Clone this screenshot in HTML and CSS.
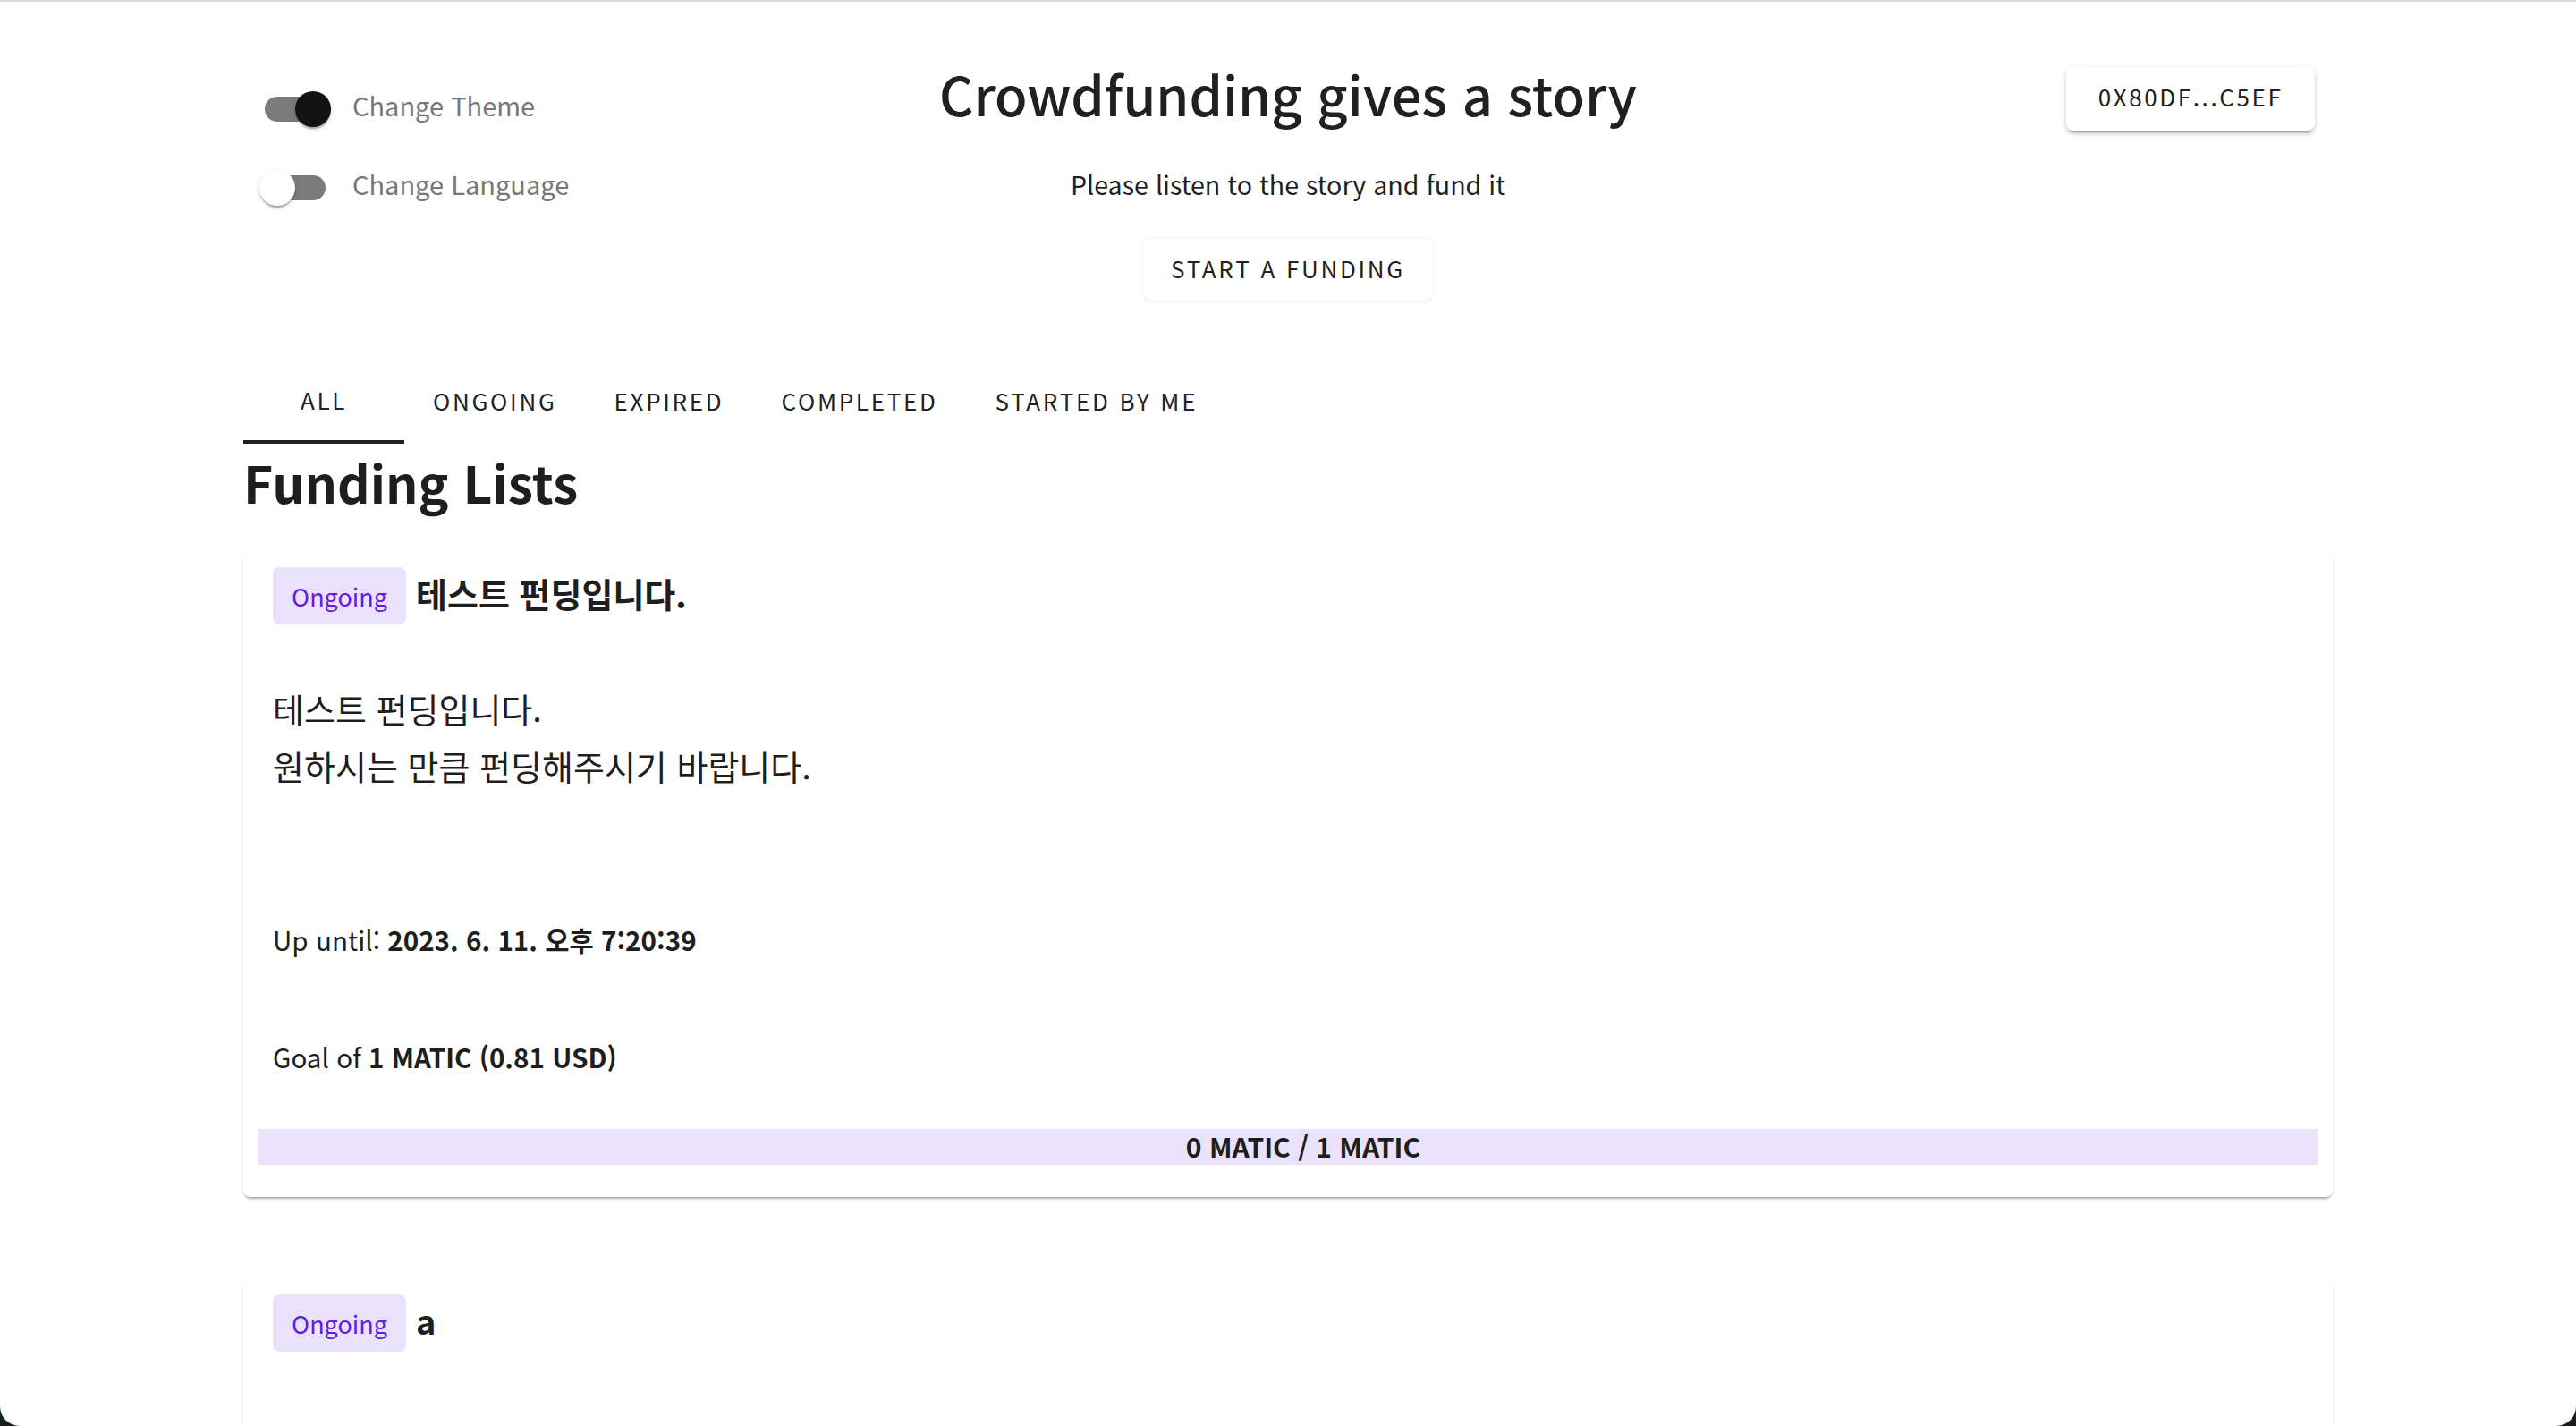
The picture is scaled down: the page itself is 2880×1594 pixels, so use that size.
FILE: index.html
```html
<!DOCTYPE html>
<html lang="ko">
<head>
<meta charset="utf-8">
<title>Crowdfunding gives a story</title>
<link rel="stylesheet" href="styles.css">
</head>
<body>
<div class="window">
  <div class="container">
    <header class="header">
      <div class="settings">
        <label class="setting">
          <span class="switch checked"><span class="track"></span><span class="thumb"></span></span>
          <span class="setting-label">Change Theme</span>
        </label>
        <label class="setting">
          <span class="switch"><span class="track"></span><span class="thumb"></span></span>
          <span class="setting-label">Change Language</span>
        </label>
      </div>
      <div class="hero">
        <h1 class="hero-title">Crowdfunding gives a story</h1>
        <p class="hero-sub">Please listen to the story and fund it</p>
        <button class="btn start-btn">START A FUNDING</button>
      </div>
      <div class="account">
        <button class="btn wallet-btn">0X80DF...C5EF</button>
      </div>
    </header>

    <nav class="tabs">
      <span class="tab active">ALL</span>
      <span class="tab">ONGOING</span>
      <span class="tab">EXPIRED</span>
      <span class="tab">COMPLETED</span>
      <span class="tab">STARTED BY ME</span>
    </nav>

    <h2 class="list-title">Funding Lists</h2>

    <article class="card">
      <div class="card-head">
        <span class="chip">Ongoing</span>
        <span class="card-title">테스트 펀딩입니다.</span>
      </div>
      <div class="card-desc">
        <p>테스트 펀딩입니다.</p>
        <p>원하시는 만큼 펀딩해주시기 바랍니다.</p>
      </div>
      <p class="card-meta until">Up until: <b>2023. 6. 11. 오후 7:20:39</b></p>
      <p class="card-meta goal">Goal of <b>1 MATIC (0.81 USD)</b></p>
      <div class="progress"><span>0 MATIC / 1 MATIC</span></div>
    </article>

    <article class="card card-next">
      <div class="card-head">
        <span class="chip">Ongoing</span>
        <span class="card-title">a</span>
      </div>
    </article>
  </div>
</div>
</body>
</html>
```

FILE: styles.css
```css
html, body {
  margin: 0;
  padding: 0;
  height: 100%;
}
body {
  background: #13201f;
  font-family: "Noto Sans CJK KR", "Noto Sans", sans-serif;
  color: #212121;
  overflow: hidden;
}
.window {
  box-sizing: border-box;
  height: 1594px;
  background: #ffffff;
  border-top: 2px solid #d9d9d9;
  border-radius: 0 0 22px 22px;
  overflow: hidden;
}
.container {
  width: 2336px;
  margin: 0 auto;
}

/* header */
.header {
  display: grid;
  grid-template-columns: 1fr auto 1fr;
  align-items: start;
}
.settings {
  display: flex;
  flex-direction: column;
  gap: 12px;
  padding-top: 82px;
}
.setting {
  display: flex;
  align-items: center;
  gap: 6px;
  height: 76px;
}
.setting-label {
  font-size: 29px;
  color: #777777;
  padding-bottom: 10px;
}
.switch {
  position: relative;
  width: 116px;
  height: 76px;
  flex: none;
}
.track {
  position: absolute;
  left: 24px;
  top: 24px;
  width: 68px;
  height: 28px;
  border-radius: 14px;
  background: #7b7b7b;
}
.thumb {
  position: absolute;
  left: 18px;
  top: 18px;
  width: 40px;
  height: 40px;
  border-radius: 50%;
  background: #ffffff;
  box-shadow: 0 4px 2px -2px rgba(0,0,0,.2), 0 2px 2px rgba(0,0,0,.14), 0 2px 6px rgba(0,0,0,.12);
}
.switch.checked .thumb {
  left: 58px;
  background: #121212;
}

.hero {
  display: flex;
  flex-direction: column;
  align-items: center;
}
.hero-title {
  margin: 66px 0 0;
  font-size: 59.5px;
  font-weight: 500;
  line-height: 72px;
  color: #202020;
}
.hero-sub {
  margin: 43px 0 0;
  font-size: 28.6px;
  line-height: 45px;
  color: #1f1f1f;
}
.btn {
  font-family: "Noto Sans CJK KR", "Noto Sans", sans-serif;
  background: #ffffff;
  border: none;
  border-radius: 8px;
  color: #222222;
  cursor: pointer;
  box-shadow: 0 6px 2px -4px rgba(0,0,0,.2), 0 4px 4px rgba(0,0,0,.14), 0 2px 10px rgba(0,0,0,.08);
}
.start-btn {
  margin-top: 38px;
  width: 324px;
  height: 70px;
  font-size: 26px;
  letter-spacing: 2.7px;
  padding-bottom: 5px;
  box-shadow: 0 3px 2px -2px rgba(0,0,0,.18), 0 0 2px rgba(0,0,0,.12);
}
.account {
  display: flex;
  justify-content: flex-end;
  padding: 73px 20px 0 0;
}
.wallet-btn {
  width: 278px;
  height: 71px;
  font-size: 26px;
  letter-spacing: 2.6px;
  padding-bottom: 7px;
}

/* tabs */
.tabs {
  display: flex;
  margin-top: 64px;
  height: 96px;
}
.tab {
  box-sizing: border-box;
  min-width: 180px;
  padding: 0 32px 2px;
  display: flex;
  align-items: center;
  justify-content: center;
  font-size: 26px;
  letter-spacing: 2.7px;
  color: #222222;
}
.tab.active {
  border-bottom: 4px solid #212121;
  padding-top: 2px;
}

.list-title {
  margin: 7px 0 0;
  font-size: 57px;
  font-weight: 700;
  line-height: 70px;
  color: #1e1e1e;
}

/* cards */
.card {
  margin-top: 45px;
  background: #ffffff;
  border-radius: 8px;
  box-shadow: 0 4px 2px -2px rgba(0,0,0,.2), 0 2px 2px rgba(0,0,0,.10), 0 2px 6px rgba(0,0,0,.06);
  padding: 16px 16px 36px;
}
.card + .card {
  margin-top: 93px;
}
.card-next {
  min-height: 300px;
}
.card-head {
  display: flex;
  align-items: center;
  gap: 11px;
  padding-left: 17px;
}
.chip {
  box-sizing: border-box;
  width: 149px;
  height: 64px;
  display: flex;
  align-items: center;
  justify-content: center;
  border-radius: 8px;
  background: #eae2fb;
  color: #6419e6;
  font-size: 27px;
}
.card-title {
  font-size: 38px;
  font-weight: 700;
  color: #1e1e1e;
  margin-top: -8px;
}
.card-desc {
  margin-top: 62px;
  padding-left: 17px;
}
.card-desc p {
  margin: 0;
  font-size: 38px;
  line-height: 64px;
  color: #1e1e1e;
}
.card-meta {
  margin: 0;
  padding-left: 17px;
  font-size: 29.6px;
  line-height: 48px;
  color: #1e1e1e;
}
.card-meta b {
  font-weight: 700;
}
.until {
  margin-top: 139px;
}
.goal {
  margin-top: 83px;
}
.progress {
  margin-top: 56px;
  height: 40px;
  background: #eae2fb;
  display: flex;
  align-items: center;
  justify-content: center;
  padding-left: 34px;
}
.progress span {
  font-size: 30px;
  font-weight: 700;
  color: #1e1e1e;
  padding-bottom: 3px;
}
```
